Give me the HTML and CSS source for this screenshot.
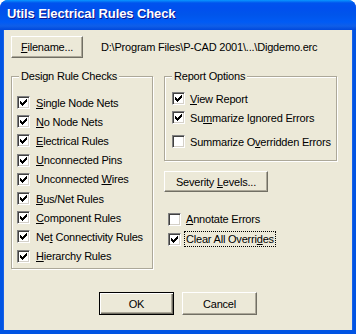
FILE: index.html
```html
<!DOCTYPE html>
<html>
	<head>
		<title>Utils Electrical Rules Check</title>
		<link rel="stylesheet" href="styles.css">
	</head>
	<body>
		<div class="window">
			<div class="titlebar">Utils Electrical Rules Check</div>
			<div class="client">
				<div class="file-row">
					<button class="btn btn-file"><u>F</u>ilename...</button>
					<span class="path">D:\Program Files\P-CAD 2001\...\Digdemo.erc</span>
				</div>
				<div class="groups">
					<div class="group group-rules">
						<span class="legend">Design Rule Checks</span>
						<div class="check-list">
							<label class="check on"><span class="box"></span><span><u>S</u>ingle Node Nets</span></label>
							<label class="check on"><span class="box"></span><span><u>N</u>o Node Nets</span></label>
							<label class="check on"><span class="box"></span><span><u>E</u>lectrical Rules</span></label>
							<label class="check on"><span class="box"></span><span><u>U</u>nconnected Pins</span></label>
							<label class="check on"><span class="box"></span><span>Unconnected <u>W</u>ires</span></label>
							<label class="check on"><span class="box"></span><span><u>B</u>us/Net Rules</span></label>
							<label class="check on"><span class="box"></span><span><u>C</u>omponent Rules</span></label>
							<label class="check on"><span class="box"></span><span>Ne<u>t</u> Connectivity Rules</span></label>
							<label class="check on"><span class="box"></span><span><u>H</u>ierarchy Rules</span></label>
						</div>
					</div>
					<div class="side">
						<div class="group group-report">
							<span class="legend">Report Options</span>
							<div class="report-list">
								<label class="check on"><span class="box"></span><span><u>V</u>iew Report</span></label>
								<label class="check on"><span class="box"></span><span>Su<u>m</u>marize Ignored Errors</span></label>
								<label class="check check-last"><span class="box"></span><span>Summarize O<u>v</u>erridden Errors</span></label>
							</div>
						</div>
						<button class="btn btn-severity">Severity <u>L</u>evels...</button>
						<div class="extra-list">
							<label class="check"><span class="box"></span><span><u>A</u>nnotate Errors</span></label>
							<label class="check on"><span class="box"></span><span class="focus">Clear All Overri<u>d</u>es</span></label>
						</div>
					</div>
				</div>
				<div class="actions">
					<button class="btn btn-default">OK</button>
					<button class="btn">Cancel</button>
				</div>
			</div>
		</div>
	</body>
</html>
```

FILE: styles.css
```css
* {
	box-sizing: border-box;
}

body {
	margin: 0;
	background: #fff;
	font-family: 'Liberation Sans', Arial, sans-serif;
	font-size: 11px;
	letter-spacing: -0.2px;
	color: #000;
}

.window {
	display: flex;
	flex-direction: column;
	width: 356px;
	height: 334px;
	border-radius: 8px 8px 0 0;
	overflow: hidden;
	background: #0054e3;
}

.titlebar {
	height: 30px;
	padding: 6px 0 0 7px;
	font-size: 13px;
	font-weight: bold;
	letter-spacing: -0.1px;
	color: #fff;
	text-shadow: 1px 1px 0 #0f1089;
	background: linear-gradient(to bottom, #0997ff 0px, #0053ee 3px, #0050ee 8px, #0055eb 15px, #005bf5 22px, #0f5ee8 26px, #0048dc 30px);
}

.client {
	flex: 1;
	display: flex;
	flex-direction: column;
	margin: 0 4px 4px 4px;
	padding: 6px 0 0 7px;
	background: #ece9d8;
	box-shadow: -1px 0 0 #1660e8, 1px 0 0 #1660e8;
}

.btn {
	display: block;
	height: 22px;
	padding: 0;
	font-family: inherit;
	font-size: 11px;
	letter-spacing: -0.2px;
	text-align: center;
	white-space: nowrap;
	color: #000;
	background: #ece9d8;
	border: 1px solid;
	border-color: #fff #716f64 #716f64 #fff;
	box-shadow: inset -1px -1px 0 #aca899;
}

.file-row {
	display: flex;
	align-items: center;
	height: 22px;
}

.btn-file {
	width: 72px;
}

.path {
	margin-left: 18px;
	white-space: nowrap;
}

.groups {
	display: flex;
	margin-top: 18px;
}

.group {
	position: relative;
	border: 1px solid #aca899;
	box-shadow: 1px 1px 0 #fff, inset 1px 1px 0 #fff;
}

.legend {
	position: absolute;
	top: -8px;
	left: 7px;
	padding: 0 2px 0 2px;
	background: #ece9d8;
	line-height: 14px;
	white-space: nowrap;
}

.group-rules {
	width: 142px;
	height: 193px;
	padding: 16px 0 0 5px;
}

.check {
	display: flex;
	align-items: center;
	gap: 6px;
	height: 19.2px;
	white-space: nowrap;
}

.box {
	width: 13px;
	height: 13px;
	flex: none;
	background: #fff;
	border: 1px solid;
	border-color: #808080 #fff #fff #808080;
	box-shadow: inset 1px 1px 0 #404040, inset -1px -1px 0 #d4d0c8;
}

.check.on .box {
	background: #fff url("data:image/svg+xml,%3Csvg xmlns='http://www.w3.org/2000/svg' width='7' height='7' shape-rendering='crispEdges'%3E%3Cpath d='M0 2h1v3H0zM1 3h1v3H1zM2 4h1v3H2zM3 3h1v3H3zM4 2h1v3H4zM5 1h1v3H5zM6 0h1v3H6z'/%3E%3C/svg%3E") no-repeat 2px 2px;
}

.side {
	display: flex;
	flex-direction: column;
	align-items: flex-start;
	margin-left: 11px;
}

.group-report {
	width: 173px;
	height: 85px;
	padding: 12px 0 0 7px;
}

.group-report .check {
	gap: 5px;
}

.check-last {
	margin-top: 5px;
}

.btn-severity {
	width: 104px;
	height: 21px;
	margin-top: 10px;
}

.extra-list {
	margin: 17px 0 0 4px;
}

.extra-list .check {
	height: 20px;
	gap: 5px;
}

.focus {
	outline: 1px dotted #000;
	outline-offset: 1px;
}

.actions {
	display: flex;
	justify-content: center;
	gap: 8px;
	margin: 23px 0 0 -7px;
}

.actions .btn {
	width: 75px;
	height: 23px;
}

.btn-default {
	border: 1px solid #000;
	box-shadow: inset 1px 1px 0 #fff, inset -1px -1px 0 #716f64, inset -2px -2px 0 #aca899;
}
```
